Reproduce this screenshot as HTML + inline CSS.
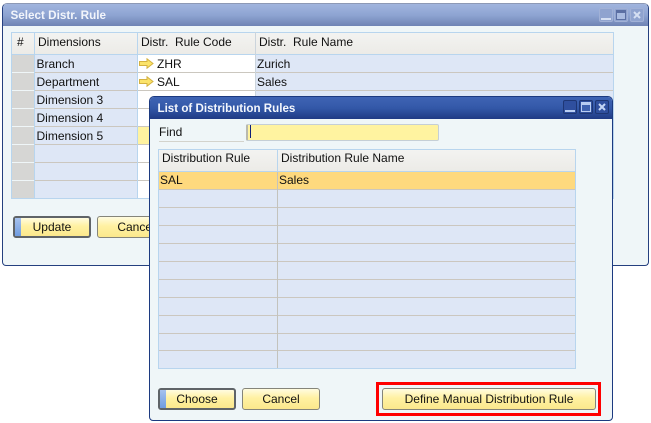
<!DOCTYPE html>
<html><head><meta charset="utf-8"><style>
html,body{margin:0;padding:0;background:#fff}
#p{position:relative;width:651px;height:423px;overflow:hidden;background:#fff;font:12px "Liberation Sans",sans-serif;color:#111}
#p div{position:absolute;box-sizing:border-box}
#p svg{position:absolute}
.t{white-space:nowrap;line-height:18px;height:18px}
.hd{background:linear-gradient(#f3f3f1,#ecebe7);}
.btn{height:22px;border:1px solid #85857a;border-radius:3px;background:linear-gradient(#fffce0,#fff1a2 45%,#fbe88c);text-align:center;line-height:20px;white-space:nowrap}
.act{border:2px solid #5f6468;line-height:18px}
.act i{position:absolute;left:0;top:0;bottom:0;width:6px;background:linear-gradient(#a6c2ee,#6f9ce0)}
.wb{width:14px;height:14px;border-radius:2px}
.b1{background:#8fa3cf;border:1px solid #a1b1d6}
.b2{background:#2f4f9e;border:1px solid #1e3674}
</style></head><body><div id="p">

<!-- back window -->
<div style="left:2px;top:3px;width:647px;height:263px;background:#eff6f8;border:1px solid #25407f;border-top:1px solid #8d99b5;border-radius:5px 5px 4px 4px"></div>
<div style="left:3px;top:4px;width:645px;height:22px;background:linear-gradient(#a1b5de,#8ea4d2 50%,#6f83b4);border-radius:4px 4px 0 0"></div>
<div class="t" style="left:10.5px;top:7px;color:#f2f5fb;font-weight:bold;font-size:11.7px">Select Distr. Rule</div>
<div class="wb b1" style="left:599px;top:8px"><div style="left:1px;top:9px;width:10px;height:2px;background:#d5dff2"></div></div>
<div class="wb b1" style="left:614px;top:8px"><div style="left:1px;top:1px;width:10px;height:10px;border:1px solid #5b6fa3;border-top-width:3px;background:#a9bbe0"></div></div>
<div class="wb b1" style="left:630px;top:8px"><svg style="left:2px;top:2px" width="8" height="8"><path d="M1 1L7 7M7 1L1 7" stroke="#d5dff2" stroke-width="2"/></svg></div>

<!-- back table -->
<div class="hd" style="left:12px;top:33px;width:601px;height:21px"></div>
<div style="left:35px;top:54px;width:102px;height:144px;background:#dee7f6"></div>
<div style="left:137px;top:54px;width:118px;height:144px;background:#fff"></div>
<div style="left:255px;top:54px;width:358px;height:144px;background:#dee7f6"></div>
<div style="left:137px;top:126px;width:118px;height:18px;background:#fff3a0"></div>
<div style="left:12px;top:55px;width:22px;height:17px;background:#d6d6d4"></div>
<div style="left:12px;top:73px;width:22px;height:17px;background:#d6d6d4"></div>
<div style="left:12px;top:91px;width:22px;height:17px;background:#d6d6d4"></div>
<div style="left:12px;top:109px;width:22px;height:17px;background:#d6d6d4"></div>
<div style="left:12px;top:127px;width:22px;height:17px;background:#d6d6d4"></div>
<div style="left:12px;top:145px;width:22px;height:17px;background:#d6d6d4"></div>
<div style="left:12px;top:163px;width:22px;height:17px;background:#d6d6d4"></div>
<div style="left:12px;top:181px;width:22px;height:17px;background:#d6d6d4"></div>
<div style="left:35px;top:72px;width:578px;height:1px;background:#cbc7bf"></div>
<div style="left:35px;top:90px;width:578px;height:1px;background:#cbc7bf"></div>
<div style="left:35px;top:108px;width:578px;height:1px;background:#cbc7bf"></div>
<div style="left:35px;top:126px;width:578px;height:1px;background:#cbc7bf"></div>
<div style="left:35px;top:144px;width:578px;height:1px;background:#cbc7bf"></div>
<div style="left:35px;top:162px;width:578px;height:1px;background:#cbc7bf"></div>
<div style="left:35px;top:180px;width:578px;height:1px;background:#cbc7bf"></div>
<div style="left:12px;top:32px;width:602px;height:1px;background:#b8d5ee"></div>
<div style="left:12px;top:54px;width:602px;height:1px;background:#b8d5ee"></div>
<div style="left:11px;top:198px;width:603px;height:1px;background:#b8d5ee"></div>
<div style="left:11px;top:32px;width:1px;height:167px;background:#b8d5ee"></div>
<div style="left:34px;top:32px;width:1px;height:166px;background:#b8d5ee"></div>
<div style="left:137px;top:32px;width:1px;height:166px;background:#b8d5ee"></div>
<div style="left:255px;top:32px;width:1px;height:166px;background:#cbd4dc"></div>
<div style="left:613px;top:32px;width:1px;height:167px;background:#b8d5ee"></div>
<div class="t" style="left:17px;top:33px">#</div>
<div class="t" style="left:38px;top:33px">Dimensions</div>
<div class="t" style="left:141px;top:33px">Distr.&nbsp; Rule Code</div>
<div class="t" style="left:259px;top:33px">Distr.&nbsp; Rule Name</div>
<div class="t" style="left:36.5px;top:55px">Branch</div>
<div class="t" style="left:36.5px;top:73px">Department</div>
<div class="t" style="left:36.5px;top:91px">Dimension 3</div>
<div class="t" style="left:36.5px;top:109px">Dimension 4</div>
<div class="t" style="left:36.5px;top:127px">Dimension 5</div>
<svg style="left:139px;top:58px" width="15" height="11"><path d="M.5 3.5H8V.8L14 5.5 8 10.2V7.5H.5Z" fill="#fbe36a" stroke="#d4b240"/></svg>
<svg style="left:139px;top:76px" width="15" height="11"><path d="M.5 3.5H8V.8L14 5.5 8 10.2V7.5H.5Z" fill="#fbe36a" stroke="#d4b240"/></svg>
<div class="t" style="left:157px;top:55px">ZHR</div>
<div class="t" style="left:157px;top:73px">SAL</div>
<div class="t" style="left:257px;top:55px">Zurich</div>
<div class="t" style="left:257px;top:73px">Sales</div>
<div class="btn act" style="left:13px;top:216px;width:78px"><i></i>Update</div>
<div class="btn" style="left:97px;top:216px;width:78px">Cancel</div>

<!-- front window -->
<div style="left:149px;top:96px;width:464px;height:325px;background:#eff6f8;border:1px solid #1c3a80;border-radius:5px 5px 4px 4px"></div>
<div style="left:150px;top:97px;width:462px;height:22px;background:linear-gradient(#3f64b4,#3358a8 50%,#1f3a84);border-radius:4px 4px 0 0"></div>
<div class="t" style="left:157.5px;top:100px;color:#f4f7fd;font-weight:bold;font-size:11.6px">List of Distribution Rules</div>
<div class="wb b2" style="left:563px;top:100px"><div style="left:1px;top:9px;width:10px;height:2px;background:#b9cdf2"></div></div>
<div class="wb b2" style="left:579px;top:100px"><div style="left:1px;top:1px;width:10px;height:10px;border:1px solid #b9cdf2;border-top-width:3px;background:#3f62b0"></div></div>
<div class="wb b2" style="left:595px;top:100px"><svg style="left:2px;top:2px" width="8" height="8"><path d="M1 1L7 7M7 1L1 7" stroke="#c5d6f5" stroke-width="2"/></svg></div>

<div class="t" style="left:159px;top:123px">Find</div>
<div style="left:159px;top:141px;width:85px;height:1px;background:#d3d3cc"></div>
<div style="left:246px;top:124px;width:193px;height:17px;background:#fff3a0;border:1px solid #c5cfd6;border-left:2px solid #b9b9ae;border-radius:2px"></div>
<div style="left:250px;top:125px;width:1px;height:13px;background:#10207a"></div>

<!-- front table -->
<div class="hd" style="left:159px;top:150px;width:416px;height:21px"></div>
<div style="left:159px;top:172px;width:416px;height:197px;background:#dee7f6"></div>
<div style="left:159px;top:171px;width:416px;height:18px;background:#fed97e"></div>
<div style="left:159px;top:189px;width:416px;height:1px;background:#cbc7bf"></div>
<div style="left:159px;top:207px;width:416px;height:1px;background:#cbc7bf"></div>
<div style="left:159px;top:225px;width:416px;height:1px;background:#cbc7bf"></div>
<div style="left:159px;top:243px;width:416px;height:1px;background:#cbc7bf"></div>
<div style="left:159px;top:261px;width:416px;height:1px;background:#cbc7bf"></div>
<div style="left:159px;top:279px;width:416px;height:1px;background:#cbc7bf"></div>
<div style="left:159px;top:297px;width:416px;height:1px;background:#cbc7bf"></div>
<div style="left:159px;top:315px;width:416px;height:1px;background:#cbc7bf"></div>
<div style="left:159px;top:333px;width:416px;height:1px;background:#cbc7bf"></div>
<div style="left:159px;top:350px;width:416px;height:1px;background:#cbc7bf"></div>
<div style="left:158px;top:149px;width:418px;height:1px;background:#b8d5ee"></div>
<div style="left:158px;top:171px;width:418px;height:1px;background:#b8d5ee"></div>
<div style="left:158px;top:368px;width:418px;height:1px;background:#b8d5ee"></div>
<div style="left:158px;top:149px;width:1px;height:220px;background:#b8d5ee"></div>
<div style="left:575px;top:149px;width:1px;height:220px;background:#b8d5ee"></div>
<div style="left:277px;top:149px;width:1px;height:22px;background:#b8d5ee"></div>
<div style="left:277px;top:172px;width:1px;height:196px;background:#c3c3bd"></div>
<div class="t" style="left:162px;top:149px">Distribution Rule</div>
<div class="t" style="left:281px;top:149px">Distribution Rule Name</div>
<div class="t" style="left:160px;top:171px">SAL</div>
<div class="t" style="left:279px;top:171px">Sales</div>

<div class="btn act" style="left:158px;top:388px;width:78px"><i></i>Choose</div>
<div class="btn" style="left:242px;top:388px;width:78px">Cancel</div>
<div style="left:376px;top:382px;width:225px;height:34px;border:3px solid #f00"></div>
<div class="btn" style="left:382px;top:388px;width:214px">Define Manual Distribution Rule</div>
</div></body></html>
